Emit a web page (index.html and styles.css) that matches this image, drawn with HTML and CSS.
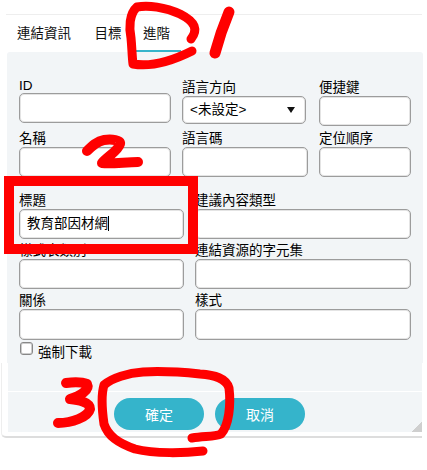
FILE: index.html
```html
<!DOCTYPE html>
<html lang="zh-Hant">
<head>
  <meta charset="UTF-8" />
  <title>連結</title>

  <link rel="stylesheet" href="styles.css">

</head>
<body>
  <div class="dialog">
    <div class="tabs">
      <a class="tab">連結資訊</a>
      <a class="tab">目標</a>
      <a class="tab active">進階</a>
    </div>

    <div class="panel">
      <div class="row row-three">
        <label class="field field-raised">ID<input type="text"></label>
        <label class="field">語言方向
          <span class="select-wrap">
            <select><option>&lt;未設定&gt;</option></select>
            <span class="select-arrow"></span>
          </span>
        </label>
        <label class="field">便捷鍵<input type="text"></label>
      </div>

      <div class="row row-three row-name">
        <label class="field">名稱<input type="text"></label>
        <label class="field">語言碼<input type="text"></label>
        <label class="field">定位順序<input type="text"></label>
      </div>

      <div class="row row-two row-title">
        <div class="field">標題<div class="text-box">教育部因材網<span class="caret"></span></div></div>
        <label class="field">建議內容類型<input type="text"></label>
      </div>

      <div class="row row-two row-close">
        <label class="field">樣式表類別<input type="text"></label>
        <label class="field">連結資源的字元集<input type="text"></label>
      </div>

      <div class="row row-two row-close">
        <label class="field">關係<input type="text" class="tall"></label>
        <label class="field">樣式<input type="text" class="tall"></label>
      </div>

      <label class="check-row"><input type="checkbox"> 強制下載</label>
    </div>

    <div class="dialog-foot">
      <div class="foot-area">
        <div class="buttons">
          <button>確定</button>
          <button>取消</button>
        </div>
        <span class="grip"></span>
      </div>
    </div>
  </div>

  <!-- red hand-drawn marks on top of the screenshot -->
  <svg class="marks" width="427" height="470" viewBox="0 0 427 470">
    <g fill="none" stroke="#ff0000" stroke-width="9" stroke-linecap="round" stroke-linejoin="round">
      <path d="M191 39 C198 30 196 22 180 14 C165 7 148 5 137 7 C129 14 129 28 131 38 C132 48 132 56 133 64 C150 67 172 61 192 51" />
      <path d="M229 12 C224 24 219 38 215 53" stroke-width="11" />
      <path d="M87 151 C92 146 97 141 104 140 C112 139 121 140 120 144 C118 151 108 156 102 163 C112 164 126 162 138 162" stroke-width="10" />
      <path d="M66 383 C74 382 82 382 87 384 C90 390 80 396 70 399 C78 400 90 402 90 409 C88 417 72 423 58 423" stroke-width="10" />
      <path d="M192 438 C205 436 215 437 221 434 C229 425 231 405 229 388 C226 378 215 375 200 374 C180 372 160 371 143 372 C128 373 112 378 104 385 C101 395 102 410 104 424 C108 436 118 443 135 449 C155 454 185 453 203 451" />
    </g>
    <rect x="9" y="181" width="184" height="68" fill="none" stroke="#ff0000" stroke-width="10" />
  </svg>
</body>
</html>
```

FILE: styles.css
```css
body {
  margin: 0;
  background: white;
  font-family: "Liberation Sans", "Noto Sans CJK TC", sans-serif;
  font-size: 13.5px;
  color: #000;
}

.dialog {
  width: 421px;
  margin: 14px 0 0 1px;
}

.tabs {
  display: flex;
  gap: 5.5px;
  height: 38px;
  margin-left: 5px;
  padding-left: 2px;
  border-top: 1px solid #eee;
  box-sizing: border-box;
}

.tab {
  padding: 10px 9px 0;
  height: 25px;
  line-height: 18px;
  color: #111;
}

.tab.active {
  padding: 10px 11px 0 7px;
  border-bottom: 2px solid #35b4cb;
}

.panel {
  width: 416px;
  height: 311px;
  margin-left: 6px;
  padding: 26px 12px 0;
  box-sizing: border-box;
  background: #f2f5f7;
  border-radius: 3px 3px 0 0;
}

.row {
  display: grid;
  column-gap: 11px;
  width: 392px;
}

.row-three {
  grid-template-columns: 152px 126px 92px;
}

.row-two {
  grid-template-columns: 165px 216px;
}

.row-name {
  margin-top: 3px;
}

.row-title {
  margin-top: 14px;
}

.row-close {
  margin-top: 2px;
}

.field {
  display: block;
  line-height: 20px;
}

.field > input,
.field > .text-box,
.field > .select-wrap {
  margin-top: -2px;
}

.field-raised {
  margin-top: -3px;
  line-height: 22px;
}

.field-raised > input {
  margin-top: -4px;
}

input[type="text"],
.text-box {
  display: block;
  width: 100%;
  height: 30px;
  padding: 0 7px;
  box-sizing: border-box;
  background: white;
  border: 1px solid #9c9c9c;
  border-radius: 5px;
  box-shadow: inset 0 0 0 1px #e4e4e4;
  font: inherit;
  line-height: 28px;
}

input.tall {
  height: 31px;
}

.caret {
  display: inline-block;
  width: 1px;
  height: 15px;
  background: #000;
  vertical-align: -3px;
}

.select-wrap {
  display: block;
  position: relative;
  width: 124px;
}

select {
  display: block;
  width: 124px;
  height: 28px;
  padding: 0 7px;
  background: white;
  border: 1px solid #9c9c9c;
  border-radius: 5px;
  box-shadow: inset 0 0 0 1px #e4e4e4;
  font: inherit;
  color: #000;
  appearance: none;
}

.select-arrow {
  position: absolute;
  top: 11px;
  left: 105px;
  border-left: 4.5px solid transparent;
  border-right: 4.5px solid transparent;
  border-top: 6px solid #111;
}

.check-row {
  display: flex;
  align-items: flex-start;
  gap: 5px;
  margin-top: 2px;
  margin-left: 1px;
  line-height: 22px;
}

.check-row input {
  width: 13px;
  height: 13px;
  margin: 0;
  background: white;
  border: 1px solid #888;
  border-radius: 3px;
  box-shadow: inset 0 0 0 1px #ccc;
  appearance: none;
}

.dialog-foot {
  width: 421px;
  height: 75px;
  padding-left: 6px;
  box-sizing: border-box;
  border-left: 1px solid #eee;
  border-bottom: 2px solid #ddd;
  border-radius: 0 0 0 5px;
}

.foot-area {
  position: relative;
  width: 414px;
  height: 69px;
  padding-top: 28px;
  box-sizing: border-box;
  background: #f2f5f7;
}

.buttons {
  display: flex;
  gap: 11px;
  padding: 6px 0 0 106px;
  border-top: 1px solid white;
}

button {
  width: 90px;
  height: 32px;
  padding: 0;
  background: #35b4cb;
  border: none;
  border-radius: 16px;
  color: white;
  font: inherit;
  font-size: 14px;
}

.grip {
  position: absolute;
  right: 0;
  bottom: 0;
  width: 11px;
  height: 11px;
  background: linear-gradient(135deg, transparent 50%, #cfcfcf 50%);
}

.marks {
  position: absolute;
  top: 0;
  left: 0;
  pointer-events: none;
}
```
